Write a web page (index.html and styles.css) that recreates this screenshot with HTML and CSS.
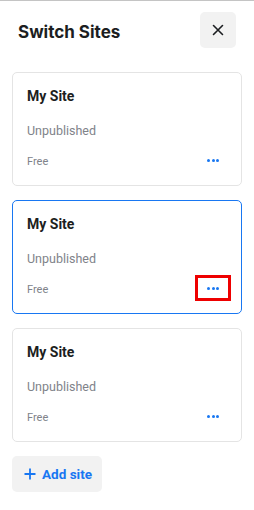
FILE: index.html
```html
<!DOCTYPE html>
<html lang="en">
  <head>
    <meta charset="UTF-8" />
    <meta name="viewport" content="width=device-width, initial-scale=1.0" />
    <title>Switch Sites</title>
    <link rel="stylesheet" href="styles.css">
  </head>
  <body>
    <div class="panel">
      <div class="header">
        <h1>Switch Sites</h1>
        <button class="close-btn" aria-label="Close">
          <svg width="12" height="12" viewBox="0 0 12 12">
            <path d="M1.5 1.5 L10.5 10.5 M10.5 1.5 L1.5 10.5" stroke="#1c1e21" stroke-width="1.6" stroke-linecap="round" fill="none" />
          </svg>
        </button>
      </div>
      <div class="site-list">
        <div class="site-card">
          <div class="site-name">My Site</div>
          <div class="site-status">Unpublished</div>
          <div class="site-footer">
            <span class="site-plan">Free</span>
            <button class="more-btn" aria-label="More">
              <span class="dot"></span><span class="dot"></span><span class="dot"></span>
            </button>
          </div>
        </div>
        <div class="site-card active">
          <div class="site-name">My Site</div>
          <div class="site-status">Unpublished</div>
          <div class="site-footer">
            <span class="site-plan">Free</span>
            <button class="more-btn highlighted" aria-label="More">
              <span class="dot"></span><span class="dot"></span><span class="dot"></span>
            </button>
          </div>
        </div>
        <div class="site-card">
          <div class="site-name">My Site</div>
          <div class="site-status">Unpublished</div>
          <div class="site-footer">
            <span class="site-plan">Free</span>
            <button class="more-btn" aria-label="More">
              <span class="dot"></span><span class="dot"></span><span class="dot"></span>
            </button>
          </div>
        </div>
        <div>
          <button class="add-btn">
            <svg width="12" height="12" viewBox="0 0 12 12">
              <path d="M6 0.5 V11.5 M0.5 6 H11.5" stroke="#1877f2" stroke-width="1.8" fill="none" />
            </svg>
            Add site
          </button>
        </div>
      </div>
    </div>
  </body>
</html>
```

FILE: styles.css
```css
* {
  margin: 0;
  padding: 0;
  box-sizing: border-box;
  font-family: "Roboto", "Inter", sans-serif;
}
body {
  width: 100%;
  min-height: 100vh;
  background: #ffffff;
}
.panel {
  border-top: 1px solid #c4c4c4;
  min-height: 510px;
}
.header {
  display: flex;
  justify-content: space-between;
  align-items: center;
  padding: 11px 18px 0 18px;
}
.header h1 {
  font-family: "Inter", sans-serif;
  font-size: 17px;
  font-weight: 700;
  color: #1c1e21;
  padding-top: 3px;
}
.close-btn {
  width: 36px;
  height: 36px;
  border: none;
  border-radius: 5px;
  background: #f2f2f2;
  display: flex;
  justify-content: center;
  align-items: center;
}
.site-list {
  display: flex;
  flex-direction: column;
  gap: 14px;
  padding: 24px 12px 0 12px;
}
.site-card {
  display: flex;
  flex-direction: column;
  border: 1px solid #e4e4e4;
  border-radius: 5px;
  padding: 13px 12px 11px 14px;
}
.site-card.active {
  border-color: #1877f2;
}
.site-name {
  font-size: 14px;
  font-weight: 700;
  line-height: 20px;
  color: #1c1e21;
}
.site-status {
  margin-top: 16px;
  font-size: 12.5px;
  line-height: 18px;
  color: #80838a;
}
.site-footer {
  margin-top: 6px;
  display: flex;
  justify-content: space-between;
  align-items: center;
}
.site-plan {
  font-size: 11px;
  color: #80838a;
  padding-top: 3px;
}
.more-btn {
  width: 32px;
  height: 28px;
  border: none;
  background: transparent;
  display: flex;
  justify-content: center;
  align-items: center;
  gap: 1.5px;
}
.more-btn .dot {
  width: 3px;
  height: 3px;
  border-radius: 50%;
  background: #1877f2;
}
.more-btn.highlighted {
  outline: 3px solid #ee0000;
  outline-offset: -1px;
  width: 32px;
  height: 22px;
  margin: 3px 0;
}
.add-btn {
  display: inline-flex;
  align-items: center;
  gap: 6px;
  height: 36px;
  padding: 0 10px 0 12px;
  border: none;
  border-radius: 5px;
  background: #f2f2f2;
  font-size: 13.5px;
  font-weight: 700;
  color: #1877f2;
}
```
